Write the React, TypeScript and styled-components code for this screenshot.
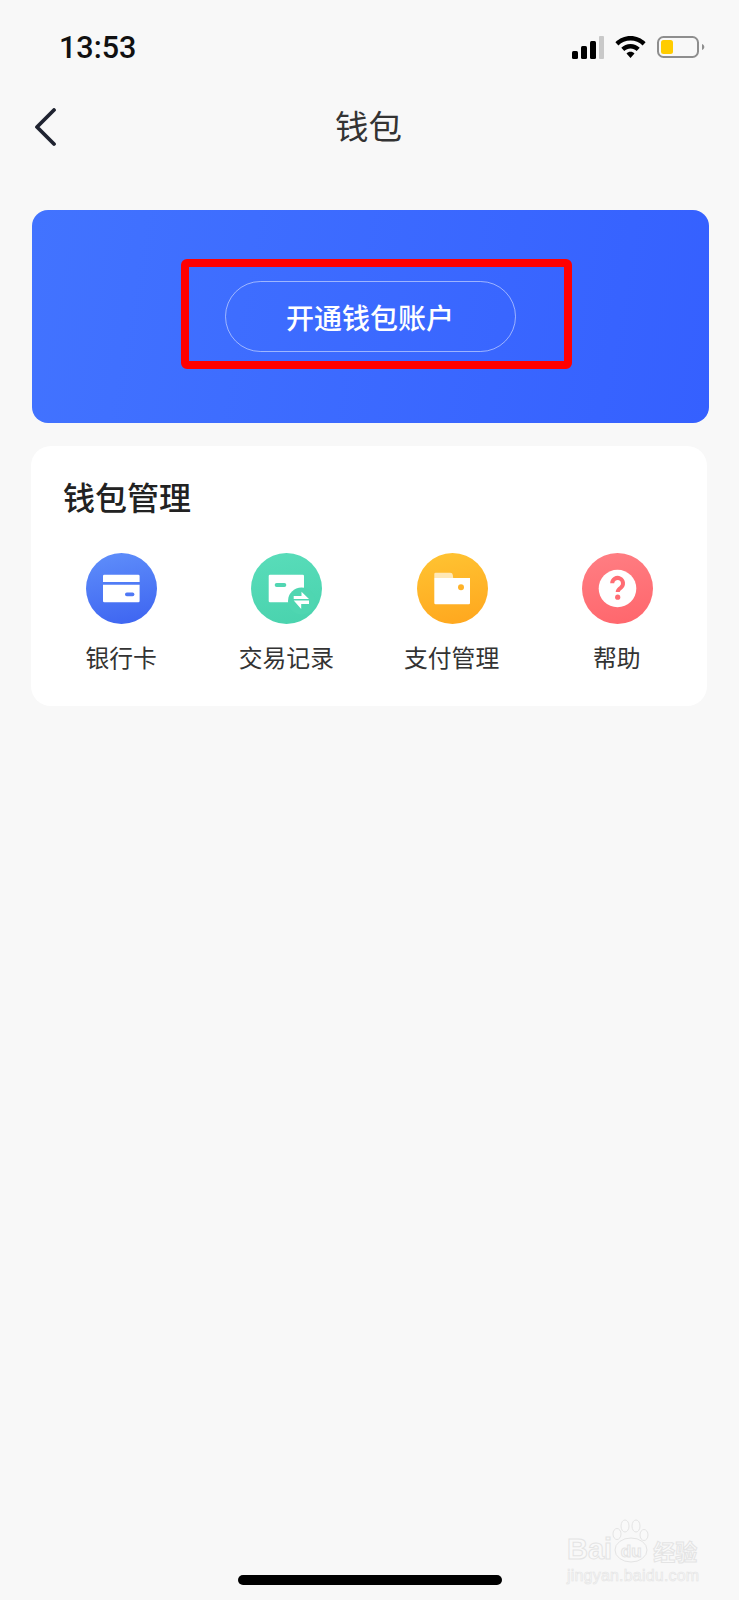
import React from 'react';
import styled, { createGlobalStyle } from 'styled-components';

const GlobalStyle = createGlobalStyle`
  html, body {
    margin: 0;
    padding: 0;
    background: #f8f8f8;
  }
  * {
    box-sizing: border-box;
  }
`;

const cjk = `"Noto Sans CJK SC", "Noto Sans", sans-serif`;

const Page = styled.div`
  position: relative;
  display: flex;
  flex-direction: column;
  width: 739px;
  height: 1600px;
  overflow: hidden;
  background: #f8f8f8;
  font-family: ${cjk};
`;

const StatusBar = styled.div`
  display: flex;
  align-items: center;
  justify-content: space-between;
  height: 94px;
  padding: 0 34px 0 59px;
`;

const Time = styled.div`
  font-family: Roboto, "Liberation Sans", sans-serif;
  font-size: 30.5px;
  font-weight: 500;
  color: #111;
`;

const StatusIcons = styled.div`
  display: flex;
  align-items: center;
  gap: 11px;
`;

const NavBar = styled.div`
  position: relative;
  display: flex;
  align-items: center;
  justify-content: center;
  height: 66px;
`;

const BackButton = styled.svg`
  position: absolute;
  left: 33px;
  top: 14px;
`;

const NavTitle = styled.h1`
  margin: 0 2px 4px 0;
  font-size: 33.5px;
  font-weight: 400;
  line-height: 40px;
  color: #333;
`;

const Banner = styled.div`
  position: relative;
  display: flex;
  align-items: center;
  justify-content: center;
  width: 677px;
  height: 213px;
  margin: 50px 0 0 32px;
  border-radius: 16px;
  background: linear-gradient(100deg, #4273ff 0%, #3560ff 100%);
`;

const OpenButton = styled.div`
  display: flex;
  align-items: center;
  justify-content: center;
  width: 291px;
  height: 71px;
  margin-left: -1px;
  border: 1px solid rgba(255, 255, 255, 0.5);
  border-radius: 36px;
  font-size: 28px;
  font-weight: 500;
  color: #fff;
`;

const Highlight = styled.div`
  position: absolute;
  left: 149px;
  top: 49px;
  width: 391px;
  height: 110px;
  border: 8px solid #ff0000;
  border-radius: 6px;
`;

const Card = styled.div`
  width: 676px;
  height: 260px;
  margin: 23px 0 0 31px;
  padding: 28px 7px 0 8px;
  border-radius: 20px;
  background: #fff;
`;

const CardTitle = styled.h2`
  margin: 0 0 0 24px;
  font-size: 32px;
  font-weight: 500;
  line-height: 44px;
  color: #222;
`;

const Tools = styled.div`
  display: grid;
  grid-template-columns: repeat(4, 1fr);
  margin-top: 35px;
`;

const Tool = styled.div`
  display: flex;
  flex-direction: column;
  align-items: center;
`;

const ToolLabel = styled.span`
  margin-top: 16px;
  margin-left: -1px;
  font-size: 23.8px;
  line-height: 34px;
  color: #333;
`;

const HomeBar = styled.div`
  width: 264px;
  height: 10px;
  margin: auto 0 15px 238px;
  border-radius: 5px;
  background: #000;
`;

const Watermark = styled.div`
  position: absolute;
  left: 567px;
  top: 1519px;
  width: 134px;
  font-family: "Liberation Sans", sans-serif;
  color: #f9f9f9;
  -webkit-text-stroke: 1px #e4e4e4;
`;

const MarkRow = styled.div`
  display: flex;
  align-items: flex-end;
  height: 44px;
  white-space: nowrap;
  font-size: 29px;
  font-weight: 700;
  line-height: 28px;
`;

const PawBox = styled.div`
  position: relative;
  display: flex;
  flex: none;
  align-items: flex-end;
  justify-content: center;
  width: 40px;
  height: 44px;
  margin-left: -1px;
`;

const Paw = styled.svg`
  position: absolute;
  left: 0;
  top: 0;
`;

const PawText = styled.span`
  position: relative;
  padding-bottom: 2px;
  font-size: 17px;
  line-height: 18px;
`;

const MarkCjk = styled.span`
  margin-left: 2px;
  font-family: ${cjk};
  font-size: 22px;
  line-height: 26px;
`;

const MarkSite = styled.div`
  margin-top: 4px;
  white-space: nowrap;
  font-size: 16px;
  line-height: 18px;
  letter-spacing: 0.2px;
  -webkit-text-stroke: 0.6px #e4e4e4;
`;

function Circle({ id, from, to, children }: { id: string; from: string; to: string; children: React.ReactNode }) {
  return (
    <svg width="71" height="71" viewBox="0 0 71 71">
      <defs>
        <linearGradient id={id} x1="0.4" y1="0" x2="0.6" y2="1">
          <stop offset="0" stopColor={from} />
          <stop offset="1" stopColor={to} />
        </linearGradient>
      </defs>
      <circle cx="35.5" cy="35.5" r="35.5" fill={`url(#${id})`} />
      {children}
    </svg>
  );
}

const tools = [
  {
    label: '银行卡',
    icon: (
      <Circle id="blue" from="#5d8cfa" to="#3f66f1">
        <path d="M17 23a1.3 1.3 0 0 1 1.3-1.3h34a1.3 1.3 0 0 1 1.3 1.3v6H17z" fill="#fff" />
        <path d="M17 31.7h36.6V48a1.3 1.3 0 0 1-1.3 1.3h-34A1.3 1.3 0 0 1 17 48z" fill="#fff" />
        <rect x="39" y="39.6" width="9.4" height="3.6" rx="1.8" fill="#4f78f5" />
      </Circle>
    ),
  },
  {
    label: '交易记录',
    icon: (
      <Circle id="green" from="#58dcb9" to="#4ad3ae">
        <rect x="17.7" y="21.7" width="35.3" height="27.6" rx="1.3" fill="#fff" />
        <rect x="23.7" y="30" width="11.6" height="4" rx="2" fill="#51d6b2" />
        <circle cx="50.5" cy="48" r="13.5" fill="#4fd6b1" />
        <path d="M42.7 46H58l-7.5-7.3V43h-7.800z" fill="#fff" />
        <path d="M58 47.600H42.700l7.500 8.400V51H58z" fill="#fff" />
      </Circle>
    ),
  },
  {
    label: '支付管理',
    icon: (
      <Circle id="orange" from="#ffc231" to="#ffa81f">
        <path d="M17.300 25v-4a1.300 1.300 0 0 1 1.300-1.300h14.600a2.600 2.600 0 0 1 2.600 2.400l.4 2.900z" fill="#ffe8b6" />
        <path d="M17.300 25h35.700v25a1.300 1.300 0 0 1-1.300 1.300H18.600a1.300 1.300 0 0 1-1.300-1.300z" fill="#fff" />
        <circle cx="44" cy="34.3" r="3" fill="#ffb228" />
      </Circle>
    ),
  },
  {
    label: '帮助',
    icon: (
      <Circle id="coral" from="#ff7d82" to="#ff676d">
        <circle cx="35.5" cy="35.5" r="18.8" fill="#fff" />
        <path
          d="M30.200 30.300a5.400 5.400 0 1 1 8.700 4.300c-2.100 1.500-3.200 2.400-3.200 4.400"
          fill="none"
          stroke="#ff6c73"
          strokeWidth="4"
        />
        <circle cx="35.7" cy="44.2" r="2.6" fill="#ff6c73" />
      </Circle>
    ),
  },
];

function App() {
  return (
    <Page>
      <GlobalStyle />
      <StatusBar>
        <Time>13:53</Time>
        <StatusIcons>
          <svg width="32" height="23" viewBox="0 0 32 23">
            <rect x="0" y="15" width="6" height="8" rx="1.5" fill="#000" />
            <rect x="9" y="10" width="6" height="13" rx="1.5" fill="#000" />
            <rect x="18" y="5" width="6" height="18" rx="1.5" fill="#000" />
            <rect x="27" y="0" width="5" height="23" rx="1" fill="#c9c9c9" />
          </svg>
          <svg width="31" height="22" viewBox="0 0 31 22">
            <path d="M15.5 0C9.6 0 4.3 2.4.4 6.2l3 3.2C6.5 6.4 10.8 4.5 15.5 4.5s9 1.9 12.1 4.9l3-3.2C26.7 2.4 21.4 0 15.5 0z" fill="#000" />
            <path d="M15.5 8c-3.6 0-6.8 1.4-9.2 3.7l3 3.2c1.6-1.6 3.8-2.5 6.2-2.5s4.600.9 6.200 2.500l3-3.200C22.300 9.400 19.100 8 15.500 8z" fill="#000" />
            <path d="M15.500 15.800c-1.600 0-3 .6-4 1.600l4 4.600 4-4.600c-1-1-2.400-1.600-4-1.600z" fill="#000" />
          </svg>
          <svg width="48" height="22" viewBox="0 0 48 22">
            <rect x="1" y="1" width="40" height="20" rx="5.5" fill="none" stroke="#8e8e8e" strokeWidth="2" />
            <rect x="4" y="4" width="12" height="14" rx="2.5" fill="#ffcc00" />
            <path d="M45 8c1.500.5 2.300 1.700 2.300 3s-.8 2.500-2.300 3z" fill="#8e8e8e" />
          </svg>
        </StatusIcons>
      </StatusBar>
      <NavBar>
        <BackButton width="26" height="40" viewBox="0 0 26 40">
          <path d="M21 2 4 19l17 17" fill="none" stroke="#1f2330" strokeWidth="3.8" strokeLinecap="round" strokeLinejoin="round" />
        </BackButton>
        <NavTitle>钱包</NavTitle>
      </NavBar>
      <Banner>
        <OpenButton>开通钱包账户</OpenButton>
        <Highlight />
      </Banner>
      <Card>
        <CardTitle>钱包管理</CardTitle>
        <Tools>
          {tools.map((tool) => (
            <Tool key={tool.label}>
              {tool.icon}
              <ToolLabel>{tool.label}</ToolLabel>
            </Tool>
          ))}
        </Tools>
      </Card>
      <HomeBar />
      <Watermark>
        <MarkRow>
          Bai
          <PawBox>
            <Paw width="40" height="44" viewBox="0 0 40 44">
              <g fill="#f9f9f9" stroke="#e4e4e4" strokeWidth="1">
                <ellipse cx="6" cy="15" rx="4" ry="5.5" />
                <ellipse cx="14" cy="7" rx="4" ry="6" />
                <ellipse cx="25" cy="7" rx="4" ry="6" />
                <ellipse cx="33" cy="16" rx="4" ry="5.5" />
                <ellipse cx="20" cy="31" rx="16" ry="12" />
              </g>
            </Paw>
            <PawText>du</PawText>
          </PawBox>
          <MarkCjk>经验</MarkCjk>
        </MarkRow>
        <MarkSite>jingyan.baidu.com</MarkSite>
      </Watermark>
    </Page>
  );
}

export default App;
